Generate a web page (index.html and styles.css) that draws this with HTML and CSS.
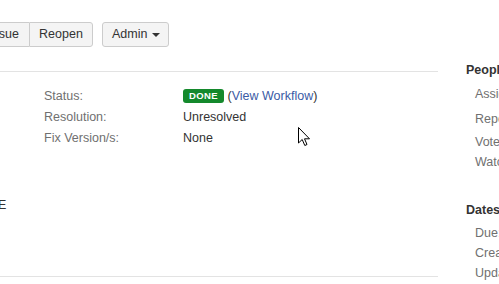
FILE: index.html
```html
<!DOCTYPE html>
<html>
<head>
<meta charset="utf-8">
<link rel="stylesheet" href="styles.css">
</head>
<body>
<div class="page">
  <div class="main">
    <div class="toolbar">
      <div class="btn-group">
        <button class="btn first">Close Issue</button>
        <button class="btn reopen">Reopen</button>
      </div>
      <button class="btn admin">Admin <span class="caret"></span></button>
    </div>
    <div class="details">
      <div class="row"><span class="label">Status:</span><span class="value"><span class="lozenge">Done</span> (<a class="link">View Workflow</a>)</span></div>
      <div class="row"><span class="label">Resolution:</span><span class="value">Unresolved</span></div>
      <div class="row"><span class="label">Fix Version/s:</span><span class="value">None</span></div>
    </div>
    <div class="cut">E</div>
    <div class="rule"></div>
  </div>
  <div class="side">
    <h4 class="heading people">People</h4>
    <div class="item i1">Assignee:</div>
    <div class="item i2">Reporter:</div>
    <div class="item i3">Votes:</div>
    <div class="item i4">Watchers:</div>
    <h4 class="heading dates">Dates</h4>
    <div class="item d1">Due:</div>
    <div class="item d2">Created:</div>
    <div class="item d3">Updated:</div>
  </div>
</div>
<svg class="cursor" width="13" height="20" viewBox="0 0 13 20"><path d="M0.5 0.5 L0.5 16 L4.2 12.5 L6.8 18.5 L9 17.5 L6.5 11.8 L11.5 11.8 Z" fill="#fff" stroke="#000" stroke-width="1" stroke-linejoin="miter"/></svg>
</body>
</html>
```
FILE: styles.css
```css
html, body {
  margin: 0;
  padding: 0;
  background: #fff;
  overflow: hidden;
  width: 499px;
  height: 284px;
}
body {
  font-family: "Liberation Sans", Arial, sans-serif;
  font-size: 12.5px;
  color: #333;
  position: relative;
}
.page {
  display: flex;
}
.main {
  width: 438px;
  flex: none;
  overflow: hidden;
}
.toolbar {
  display: flex;
  align-items: flex-start;
  padding-top: 22px;
  height: 72px;
  box-sizing: border-box;
  border-bottom: 1px solid #e3e3e3;
}
.btn-group {
  display: flex;
  margin-left: -51px;
}
.btn {
  font-family: "Liberation Sans", Arial, sans-serif;
  font-size: 12.5px;
  color: #333;
  background: #f4f4f4;
  border: 1px solid #ccc;
  border-radius: 3px;
  height: 25px;
  margin: 0;
  line-height: 23px;
  white-space: nowrap;
  box-sizing: border-box;
  flex: none;
}
.btn-group .btn.first {
  border-radius: 3px 0 0 3px;
  border-right: none;
  width: 80px;
  padding: 0 10px 0 0;
  text-align: right;
}
.btn-group .btn.reopen {
  border-radius: 0 3px 3px 0;
  width: 64px;
  padding: 0;
  text-align: center;
}
.admin {
  margin-left: 9px;
  width: 67px;
  padding: 0 0 0 9px;
  text-align: left;
}
.caret {
  display: inline-block;
  width: 0;
  height: 0;
  border-left: 4px solid transparent;
  border-right: 4px solid transparent;
  border-top: 4px solid #333;
  vertical-align: middle;
  margin-left: 1px;
}
.details {
  padding-top: 13px;
}
.row {
  display: flex;
  height: 21px;
  align-items: center;
  white-space: nowrap;
}
.label {
  width: 139px;
  padding-left: 44px;
  color: #707070;
  flex: none;
}
.value {
  color: #333;
}
.lozenge {
  display: inline-block;
  background: #14892c;
  color: #fff;
  font-size: 9.5px;
  font-weight: bold;
  text-transform: uppercase;
  letter-spacing: 0.4px;
  border-radius: 3px;
  padding: 0 6px;
  height: 14px;
  line-height: 14px;
  vertical-align: 1px;
}
.link {
  color: #3b5ba5;
  text-decoration: none;
}
.cut {
  margin-top: 47px;
  margin-left: -2px;
  height: 20px;
  line-height: 20px;
  color: #333;
}
.rule {
  margin-top: 61px;
  border-top: 1px solid #e3e3e3;
}
.side {
  padding-left: 28px;
  padding-top: 61px;
  white-space: nowrap;
}
.heading {
  margin: 0;
  font-size: 12.5px;
  font-weight: bold;
  color: #333;
  height: 18px;
  line-height: 18px;
}
.item {
  padding-left: 9px;
  color: #707070;
  line-height: 18px;
  height: 18px;
}
.i1 { margin-top: 6px; }
.i2 { margin-top: 7px; }
.i3 { margin-top: 5px; }
.i4 { margin-top: 2px; }
.dates { margin-top: 30px; }
.d1 { margin-top: 5px; }
.d2 { margin-top: 2px; }
.d3 { margin-top: 2px; }
.cursor {
  position: absolute;
  left: 298px;
  top: 127px;
}
```
